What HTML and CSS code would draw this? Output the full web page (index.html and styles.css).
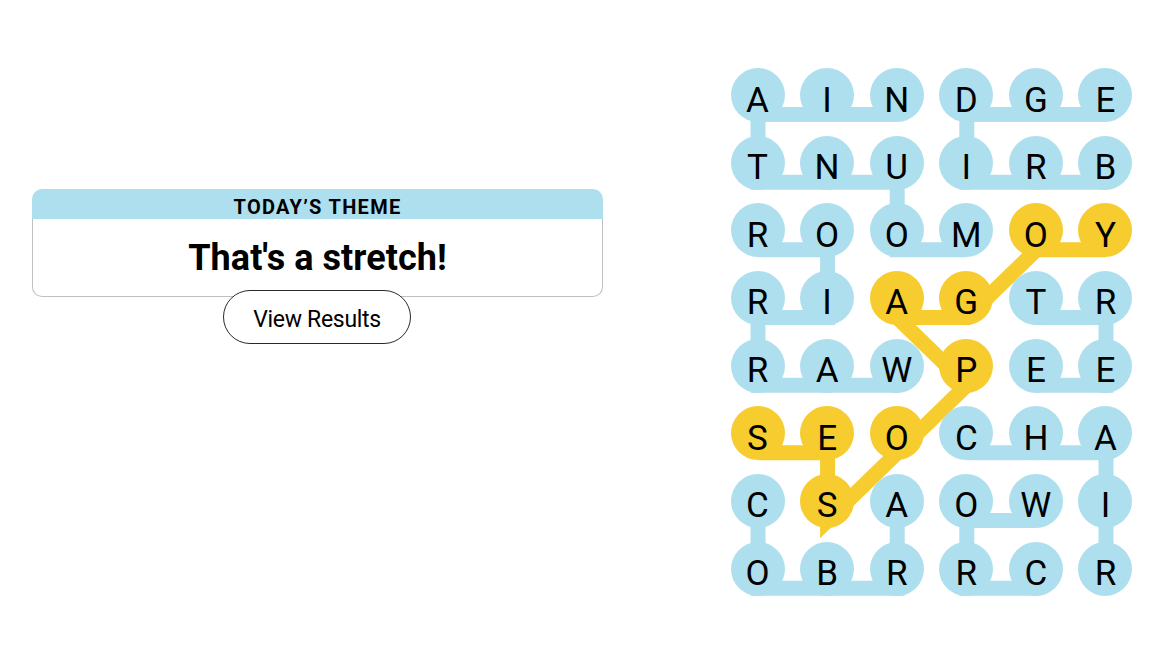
FILE: index.html
```html
<!DOCTYPE html>
<html lang="en">
<head>
<meta charset="utf-8">
<title>Strands</title>
<link rel="stylesheet" href="styles.css">
</head>
<body>
<main class="page">
  <section class="side">
    <div class="theme-card">
      <div class="theme-head">TODAY’S THEME</div>
      <div class="theme-body"><h1 class="theme-title">That's a stretch!</h1></div>
    </div>
    <button class="results-btn" type="button">View Results</button>
  </section>

  <section class="board-wrap">
    <div class="board">
      <svg class="links" width="403" height="528" viewBox="0 0 403 528" aria-hidden="true">
        <g class="found" fill="none" stroke="#aedfee" stroke-width="15" stroke-linejoin="miter" stroke-linecap="butt">
          <path d="M235.8 181.83 L166.2 181.83 L166.2 114.17 L27 114.17 L27 46.5 L166.2 46.5"/>
          <path d="M375 114.17 L235.8 114.17 L235.8 46.5 L375 46.5"/>
          <path d="M166.2 317.17 L27 317.17 L27 249.5 L96.6 249.5 L96.6 181.83 L27 181.83"/>
          <path d="M305.4 249.5 L375 249.5 L375 317.17 L305.4 317.17"/>
          <path d="M235.8 384.83 L375 384.83 L375 520.17"/>
          <path d="M27 452.5 L27 520.17 L166.2 520.17 L166.2 452.5"/>
          <path d="M305.4 520.17 L235.8 520.17 L235.8 452.5 L305.4 452.5"/>
        </g>
        <path fill="none" stroke="#f7cc2e" stroke-width="15" stroke-linejoin="miter" stroke-miterlimit="4" stroke-linecap="butt"
          d="M27 384.83 L96.6 384.83 L96.6 452.5 L166.2 384.83 L235.8 317.17 L166.2 249.5 L235.8 249.5 L305.4 181.83 L375 181.83"/>
      </svg>
      <div class="grid">
        <div class="cell">A</div><div class="cell">I</div><div class="cell">N</div><div class="cell">D</div><div class="cell">G</div><div class="cell">E</div>
        <div class="cell">T</div><div class="cell">N</div><div class="cell">U</div><div class="cell">I</div><div class="cell">R</div><div class="cell">B</div>
        <div class="cell">R</div><div class="cell">O</div><div class="cell">O</div><div class="cell">M</div><div class="cell span">O</div><div class="cell span">Y</div>
        <div class="cell">R</div><div class="cell">I</div><div class="cell span">A</div><div class="cell span">G</div><div class="cell">T</div><div class="cell">R</div>
        <div class="cell">R</div><div class="cell">A</div><div class="cell">W</div><div class="cell span">P</div><div class="cell">E</div><div class="cell">E</div>
        <div class="cell span">S</div><div class="cell span">E</div><div class="cell span">O</div><div class="cell">C</div><div class="cell">H</div><div class="cell">A</div>
        <div class="cell">C</div><div class="cell span">S</div><div class="cell">A</div><div class="cell">O</div><div class="cell">W</div><div class="cell">I</div>
        <div class="cell">O</div><div class="cell">B</div><div class="cell">R</div><div class="cell">R</div><div class="cell">C</div><div class="cell">R</div>
      </div>
    </div>
  </section>
</main>
</body>
</html>
```

FILE: styles.css
```css
* { box-sizing: border-box; }

html, body {
  margin: 0;
  padding: 0;
  background: #ffffff;
}

body {
  font-family: Roboto, "Liberation Sans", Arial, sans-serif;
  color: #000;
}

.page {
  display: flex;
  width: 1170px;
  height: 658px;
  overflow: hidden;
}

.side {
  display: flex;
  flex-direction: column;
  align-items: center;
  width: 571px;
  margin-left: 32px;
  padding-top: 189px;
}

.theme-card {
  width: 571px;
}

.theme-head {
  height: 30px;
  background: #aedfee;
  border-radius: 10px 10px 0 0;
  text-align: center;
  font-weight: 700;
  font-size: 20px;
  line-height: 36px;
  letter-spacing: 1.3px;
}

.theme-body {
  height: 78px;
  border: 1px solid #c0c0c0;
  border-top: none;
  border-radius: 0 0 10px 10px;
  display: flex;
  align-items: center;
  justify-content: center;
  padding-top: 1px;
}

.theme-title {
  margin: 0;
  font-size: 36px;
  font-weight: 700;
  line-height: 1;
  letter-spacing: 0.05px;
}

.results-btn {
  margin-top: -7px;
  width: 188px;
  height: 54px;
  border: 1px solid #2a2a2a;
  border-radius: 27px;
  background: #ffffff;
  font-family: Roboto, "Liberation Sans", Arial, sans-serif;
  font-size: 23px;
  letter-spacing: -0.3px;
  color: #000;
  padding: 4px 0 0 0;
  margin-left: -1px;
}

.board-wrap {
  margin-left: 127.5px;
  padding-top: 68px;
}

.board {
  position: relative;
  width: 403px;
  height: 528px;
}

.links {
  position: absolute;
  left: 0;
  top: 0;
  overflow: visible;
}

.grid {
  position: relative;
  display: grid;
  grid-template-columns: repeat(6, 54px);
  grid-auto-rows: 54px;
  column-gap: 15.6px;
  row-gap: 13.67px;
}

.cell {
  width: 54px;
  height: 54px;
  border-radius: 50%;
  background: #aedfee;
  display: flex;
  align-items: center;
  justify-content: center;
  padding-top: 10px;
  font-size: 35px;
  line-height: 1;
  font-weight: 400;
}

.cell.span {
  background: #f7cc2e;
}
```
